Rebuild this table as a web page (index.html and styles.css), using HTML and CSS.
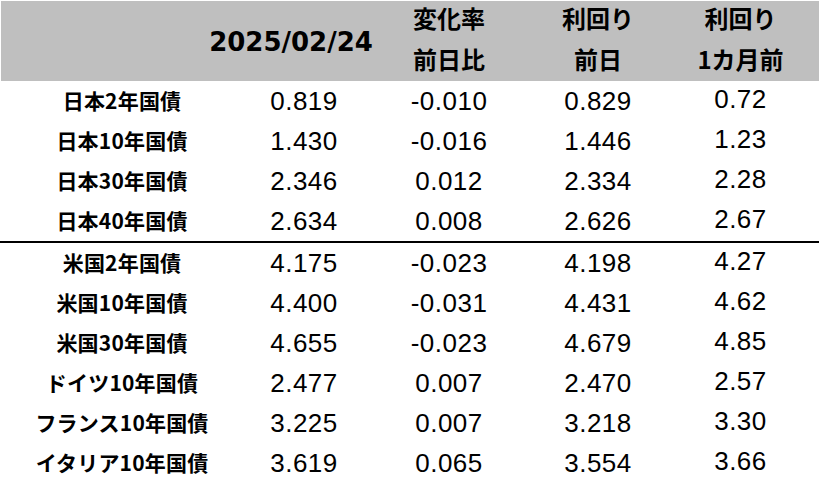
FILE: index.html
```html
<!DOCTYPE html>
<html lang="ja">
<head>
<meta charset="utf-8">
<link rel="stylesheet" href="styles.css">
</head>
<body>
<div class="table">
  <div class="head">
    <div class="hc"></div>
    <div class="hc date">2025/02/24</div>
    <div class="hc c3"><span>変化率</span><span>前日比</span></div>
    <div class="hc c4"><span>利回り</span><span>前日</span></div>
    <div class="hc c5"><span>利回り</span><span>1カ月前</span></div>
  </div>
  <div class="group">
    <div class="row"><div class="lbl">日本2年国債</div><div class="num">0.819</div><div class="num">-0.010</div><div class="num">0.829</div><div class="num n5">0.72</div></div>
    <div class="row"><div class="lbl">日本10年国債</div><div class="num">1.430</div><div class="num">-0.016</div><div class="num">1.446</div><div class="num n5">1.23</div></div>
    <div class="row"><div class="lbl">日本30年国債</div><div class="num">2.346</div><div class="num">0.012</div><div class="num">2.334</div><div class="num n5">2.28</div></div>
    <div class="row"><div class="lbl">日本40年国債</div><div class="num">2.634</div><div class="num">0.008</div><div class="num">2.626</div><div class="num n5">2.67</div></div>
  </div>
  <div class="group sep">
    <div class="row"><div class="lbl">米国2年国債</div><div class="num">4.175</div><div class="num">-0.023</div><div class="num">4.198</div><div class="num n5">4.27</div></div>
    <div class="row"><div class="lbl">米国10年国債</div><div class="num">4.400</div><div class="num">-0.031</div><div class="num">4.431</div><div class="num n5">4.62</div></div>
    <div class="row"><div class="lbl">米国30年国債</div><div class="num">4.655</div><div class="num">-0.023</div><div class="num">4.679</div><div class="num n5">4.85</div></div>
    <div class="row"><div class="lbl">ドイツ10年国債</div><div class="num">2.477</div><div class="num">0.007</div><div class="num">2.470</div><div class="num n5">2.57</div></div>
    <div class="row"><div class="lbl">フランス10年国債</div><div class="num">3.225</div><div class="num">0.007</div><div class="num">3.218</div><div class="num n5">3.30</div></div>
    <div class="row"><div class="lbl">イタリア10年国債</div><div class="num">3.619</div><div class="num">0.065</div><div class="num">3.554</div><div class="num n5">3.66</div></div>
  </div>
</div>
</body>
</html>
```
FILE: styles.css
```css
html, body {
  margin: 0;
  padding: 0;
  background: #ffffff;
}
.table {
  width: 819px;
  padding-top: 1px;
  color: #000000;
}
.head, .row {
  display: grid;
  grid-template-columns: 244px 120px 170px 128px 157px;
}
.head {
  height: 80px;
  margin-left: 1px;
  background: #bfbfbf;
  grid-template-columns: 243px 120px 170px 128px 157px;
}
.hc {
  display: flex;
  flex-direction: column;
  align-items: center;
  font-family: "Noto Sans CJK JP", "DejaVu Sans", sans-serif;
  font-weight: bold;
  font-size: 24px;
  line-height: 41px;
  margin-top: -4px;
}
.date {
  justify-content: center;
  margin-top: 0;
  padding-top: 2px;
  padding-right: 26px;
  font-family: "DejaVu Sans", sans-serif;
  font-size: 26px;
}
.row {
  height: 40px;
  align-items: center;
}
.sep {
  border-top: 2px solid #000000;
}
.lbl {
  text-align: center;
  padding-bottom: 3px;
  font-family: "Noto Sans CJK JP", sans-serif;
  font-weight: bold;
  font-size: 21px;
  letter-spacing: 0.2px;
}
.num {
  text-align: center;
  font-family: "Liberation Sans", Arial, sans-serif;
  font-size: 26px;
  letter-spacing: 0.5px;
}
.n5 {
  padding-bottom: 4px;
}
```
